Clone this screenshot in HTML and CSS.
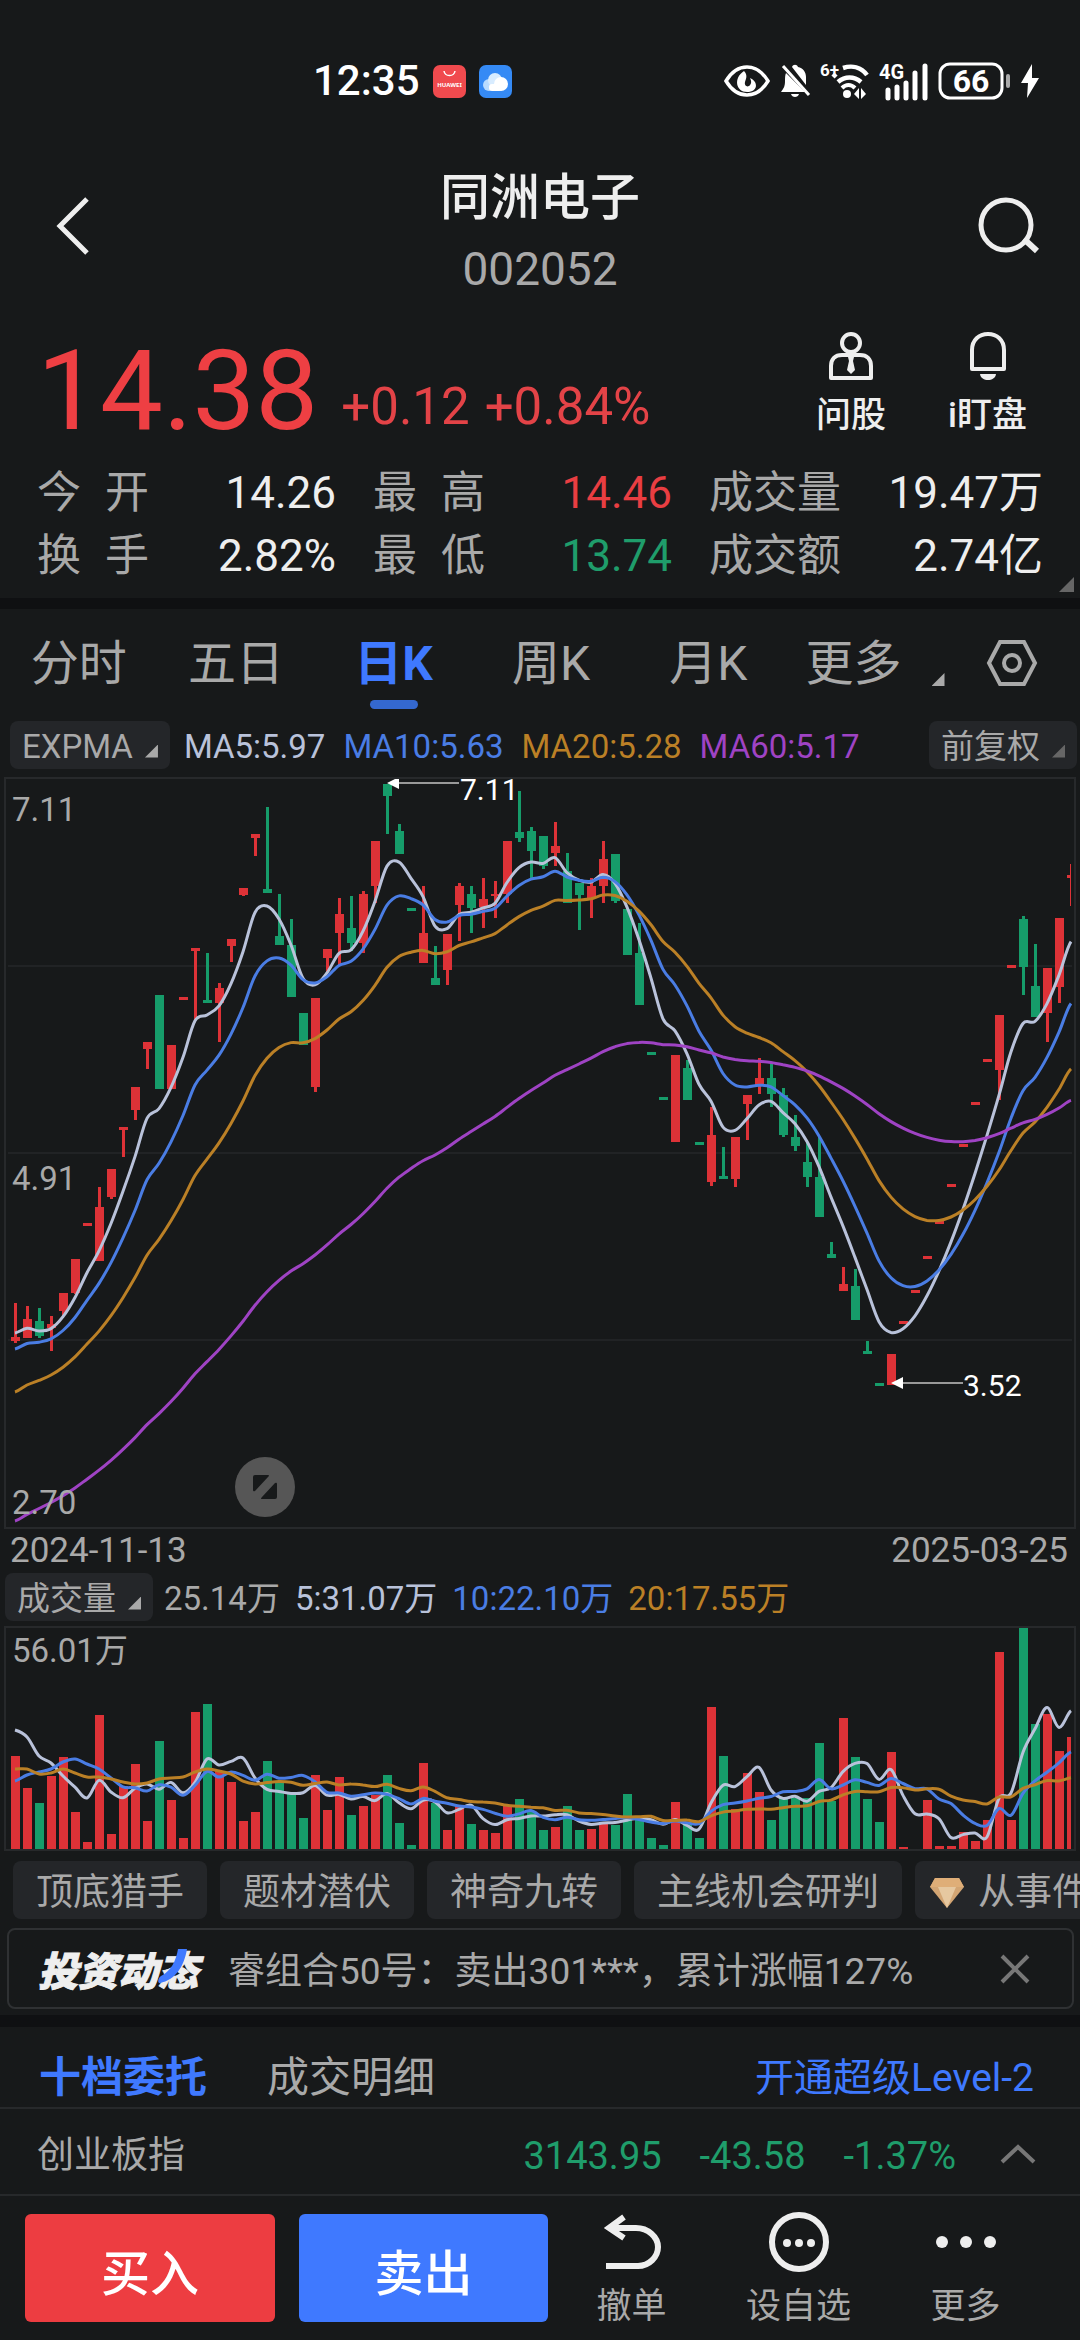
FILE: index.html
```html
<!DOCTYPE html>
<html lang="zh-CN">

<head>
  <meta charset="utf-8">
  <meta name="viewport" content="width=device-width, initial-scale=1">
  <title>同洲电子 002052</title>

  <link rel="stylesheet" href="styles.css">
</head>

<body>
  <div class="statusbar">
    <div class="status-left">
      <span class="clock">12:35</span>
      <svg class="app-icon" width="33" height="33" viewBox="0 0 33 33">
        <rect width="33" height="33" rx="7" fill="#f04a4e"/>
        <path d="M11 6c1 6 10 6 11 0" fill="none" stroke="#fff" stroke-width="1.5"/>
        <text x="16.5" y="22" class="app-text" text-anchor="middle">HUAWEI</text>
      </svg>
      <svg class="app-icon" width="33" height="33" viewBox="0 0 33 33">
        <rect width="33" height="33" rx="7" fill="#358af5"/>
        <circle cx="10" cy="20" r="6" fill="#b9dcff"/>
        <circle cx="16" cy="15" r="7" fill="#d8ecff"/>
        <circle cx="22" cy="19" r="7" fill="#fff"/>
        <rect x="10" y="19" width="13" height="7" rx="3" fill="#fff"/>
      </svg>
    </div>
    <div class="status-right">
      <svg width="46" height="32" viewBox="0 0 46 32">
        <path d="M2 16C8 6 15 2 23 2s15 4 21 14c-6 10-13 14-21 14S8 26 2 16z" fill="none" stroke="#fff" stroke-width="3.5"/>
        <path d="M20 6c4 4 2 8 1 11-1 4 3 6 5 3 2-2 1-5 0-7 8 3 9 14-3 14-11 0-14-14-3-21z" fill="#fff"/>
      </svg>
      <svg width="32" height="34" viewBox="0 0 32 34">
        <path d="M13 3c1-3 5-3 6 0 5 1 8 5 8 10v8zM7 9l19 19H2c3-4 4-6 4-11 0-3 0-6 1-8zM12 30h8c-1 4-7 4-8 0z" fill="#fff"/>
        <path d="M4 2l26 29" stroke="#fff" stroke-width="3"/>
      </svg>
      <svg width="50" height="38" viewBox="0 0 50 38">
        <text x="0" y="14" class="net-text">6+</text>
        <path d="M23 6c9-3 18-1 24 7M13 15l3-3M18 20c7-6 16-6 23 0" fill="none" stroke="#fff" stroke-width="4.5"/>
        <path d="M22 26c4-4 9-4 13 0" fill="none" stroke="#fff" stroke-width="4"/>
        <circle cx="27" cy="32" r="4" fill="#fff"/>
        <path d="M34 32l5-6v11zM46 32l-5-6v11z" fill="#fff"/>
      </svg>
      <svg width="50" height="38" viewBox="0 0 50 38">
        <text x="0" y="17" class="net-text net-4g">4G</text>
        <path d="M9 36v-8M18 36V25M27 36V21M36 36V11M46 36V4" stroke="#fff" stroke-width="5" stroke-linecap="round"/>
      </svg>
      <svg width="74" height="38" viewBox="0 0 74 38">
        <rect x="2" y="2" width="62" height="34" rx="10" fill="none" stroke="#fff" stroke-width="3"/>
        <path d="M70 14v10" stroke="#aaa" stroke-width="4" stroke-linecap="round"/>
        <text x="33" y="30" class="battery-text" text-anchor="middle">66</text>
      </svg>
      <svg width="18" height="34" viewBox="0 0 18 34">
        <path d="M11 0L0 19h7L6 34l12-20h-7z" fill="#fff"/>
      </svg>
    </div>
  </div>

  <header class="header">
    <button class="icon-btn" aria-label="返回">
      <svg width="64" height="60" viewBox="0 0 64 60"><path d="M47 3L20 30l27 27" fill="none" stroke="#eee" stroke-width="5"/></svg>
    </button>
    <div class="header-title">
      <h1>同洲电子</h1>
      <p>002052</p>
    </div>
    <button class="icon-btn" aria-label="搜索">
      <svg width="64" height="60" viewBox="0 0 64 60"><circle cx="30" cy="29" r="25" fill="none" stroke="#eee" stroke-width="5"/><path d="M48 43l13 12" stroke="#eee" stroke-width="6"/></svg>
    </button>
  </header>

  <section class="quote">
    <div class="quote-top">
      <div class="price">
        <strong>14.38</strong>
        <span>+0.12</span>
        <span>+0.84%</span>
      </div>
      <div class="quote-actions">
        <button>
          <svg width="48" height="50" viewBox="0 0 48 50">
            <circle cx="24" cy="12" r="9" fill="none" stroke="#eee" stroke-width="4"/>
            <path d="M4 47V35c0-7 4-11 11-11h18c7 0 11 4 11 11v12z" fill="none" stroke="#eee" stroke-width="4" stroke-linejoin="round"/>
            <path d="M21 26h6l-1 4 2 9-4 4-4-4 2-9z" fill="#eee"/>
          </svg>
          问股
        </button>
        <button>
          <svg width="48" height="50" viewBox="0 0 48 50">
            <path d="M8 38V19C8 9 15 3 24 3s16 6 16 16v19z" fill="none" stroke="#eee" stroke-width="4" stroke-linejoin="round"/>
            <path d="M16 43h16c-1 8-15 8-16 0z" fill="#eee"/>
          </svg>
          i盯盘
        </button>
      </div>
    </div>
    <dl class="stats">
      <div><dt><span>今</span><span>开</span></dt><dd>14.26</dd></div>
      <div><dt><span>最</span><span>高</span></dt><dd class="up">14.46</dd></div>
      <div><dt>成交量</dt><dd>19.47万</dd></div>
      <div><dt><span>换</span><span>手</span></dt><dd>2.82%</dd></div>
      <div><dt><span>最</span><span>低</span></dt><dd class="down">13.74</dd></div>
      <div><dt>成交额</dt><dd>2.74亿</dd></div>
    </dl>
    <i class="corner quote-corner"></i>
  </section>

  <nav class="period">
    <button>分时</button>
    <button>五日</button>
    <button class="active">日K</button>
    <button>周K</button>
    <button>月K</button>
    <button class="period-more">更多<i class="corner"></i></button>
    <button class="period-set" aria-label="设置">
      <svg width="52" height="48" viewBox="0 0 52 48"><path d="M14 3h24l11 21-11 21H14L3 24z" fill="none" stroke="#a9a9a9" stroke-width="4"/><circle cx="26" cy="24" r="8" fill="none" stroke="#a9a9a9" stroke-width="4"/></svg>
    </button>
  </nav>

  <div class="legend">
    <button class="chip">EXPMA<i class="corner"></i></button>
    <span class="c5">MA5:5.97</span>
    <span class="c10">MA10:5.63</span>
    <span class="c20">MA20:5.28</span>
    <span class="c60">MA60:5.17</span>
    <button class="chip chip-right">前复权<i class="corner dim"></i></button>
  </div>

  <div class="chart">
    <svg id="kline" viewBox="0 0 1070 750">
      <path d="M3 188H1067M3 375H1067M3 562H1067" stroke="#2d2f31" stroke-width="1"/>
      <g id="candles"></g>
      <g id="lines"></g>
      <g class="axis-text">
        <text x="7" y="43">7.11</text>
        <text x="7" y="412">4.91</text>
        <text x="7" y="736">2.70</text>
      </g>
      <path d="M394 5H454M898 605H958" stroke="#999" stroke-width="2"/>
      <path d="M382 5l12-6v12zM886 605l12-6v12z" fill="#fff"/>
      <g class="mark-text">
        <text x="455" y="22">7.11</text>
        <text x="958" y="618">3.52</text>
      </g>
    </svg>
    <button class="expand" aria-label="全屏">
      <svg width="24" height="24" viewBox="0 0 24 24"><path d="M2 0h13q2 0 0 2L2 16q-2 1-2-1V2q0-2 2-2zM22 24H9q-2 0 0-2L22 8q2-1 2 1v13q0 2-2 2z" fill="#17191a"/></svg>
    </button>
  </div>
  <div class="dates"><time>2024-11-13</time><time>2025-03-25</time></div>

  <div class="legend legend-vol">
    <button class="chip">成交量<i class="corner"></i></button>
    <span>25.14万</span>
    <span class="c5">5:31.07万</span>
    <span class="c10">10:22.10万</span>
    <span class="c20">20:17.55万</span>
  </div>
  <div class="chart">
    <svg id="volume" viewBox="0 0 1070 223">
      <g id="bars"></g>
      <g id="vlines"></g>
      <text x="7" y="35" class="axis-text">56.01万</text>
    </svg>
  </div>

  <div class="tags">
    <button>顶底猎手</button>
    <button>题材潜伏</button>
    <button>神奇九转</button>
    <button>主线机会研判</button>
    <button class="tag-vip">
      <svg width="34" height="30" viewBox="0 0 34 30"><path d="M5 0h24l5 9-17 21L0 9z" fill="#d3a573"/><path d="M5 0h24l5 9H0z" fill="#dfae78"/><path d="M8 9h18l-9 21z" fill="#e6c8a0"/></svg>
      从事件
    </button>
  </div>

  <div class="notice">
    <div class="notice-logo">投资动态<svg width="30" height="36" viewBox="0 0 30 36"><path d="M29 0c-3 18-12 31-27 34-3 0-2-5 1-7C13 22 18 12 20 0z" fill="#3f79ff"/></svg></div>
    <p>睿组合50号：卖出301***，累计涨幅127%</p>
    <button class="icon-btn" aria-label="关闭">
      <svg width="30" height="30" viewBox="0 0 30 30"><path d="M2 2l26 26M28 2L2 28" stroke="#777" stroke-width="4"/></svg>
    </button>
  </div>

  <section class="orders">
    <div class="order-tabs">
      <button class="active">十档委托</button>
      <button>成交明细</button>
      <a href="#level2">开通超级Level-2</a>
    </div>
    <div class="index-row">
      <span class="index-name">创业板指</span>
      <span>3143.95</span>
      <span>-43.58</span>
      <span>-1.37%</span>
      <button class="icon-btn" aria-label="展开">
        <svg width="36" height="20" viewBox="0 0 36 20"><path d="M2 18L18 3l16 15" fill="none" stroke="#777" stroke-width="4"/></svg>
      </button>
    </div>
  </section>

  <footer class="trade">
    <button class="buy">买入</button>
    <button class="sell">卖出</button>
    <button class="act">
      <svg width="62" height="60" viewBox="0 0 62 60"><path d="M23 5L8 16l15 10M8 16h27c12 0 22 9 22 19S48 54 37 54H5" fill="none" stroke="#eee" stroke-width="6"/></svg>
      撤单
    </button>
    <button class="act">
      <svg width="62" height="60" viewBox="0 0 62 60"><circle cx="31" cy="30" r="27" fill="none" stroke="#eee" stroke-width="6"/><g fill="#eee"><circle cx="19" cy="31" r="4"/><circle cx="31" cy="31" r="4"/><circle cx="43" cy="31" r="4"/></g></svg>
      设自选
    </button>
    <button class="act">
      <svg width="62" height="60" viewBox="0 0 62 60"><g fill="#eee"><circle cx="7" cy="30" r="6"/><circle cx="31" cy="30" r="6"/><circle cx="55" cy="30" r="6"/></g></svg>
      更多
    </button>
  </footer>

  <script src="chart.js"></script>
</body>

</html>
```

FILE: styles.css
```css
* {
  box-sizing: border-box;
}

body {
  margin: 0;
  background: #17191a;
  color: #eee;
  font-family: Roboto, "Noto Sans CJK SC", sans-serif;
  overflow-x: hidden;
}

h1, p, dl, dt, dd {
  margin: 0;
}

button {
  padding: 0;
  border: 0;
  background: none;
  color: inherit;
  font: inherit;
  white-space: nowrap;
}

svg {
  display: block;
  flex: none;
}

.up { color: #e93e42; }
.down { color: #1f9d6b; }
.c5 { color: #b9c2da; }
.c10 { color: #4a7de4; }
.c20 { color: #bb8026; }
.c60 { color: #9f43c4; }

/* small triangle in the lower right of a drop-down */
.corner {
  display: inline-block;
  width: 13px;
  height: 13px;
  background: #a9a9a9;
  clip-path: polygon(100% 0, 100% 100%, 0 100%);
}

.corner.dim {
  background: #666;
}

/* status bar */
.statusbar {
  display: flex;
  justify-content: space-between;
  align-items: center;
  height: 162px;
  padding: 0 41px 0 313px;
  color: #fff;
}

.status-left,
.status-right {
  display: flex;
  align-items: center;
}

.status-left { gap: 13px; }
.status-right { gap: 9px; }

.statusbar svg {
  overflow: visible;
}

.clock {
  font-size: 42px;
  font-weight: 500;
  line-height: 56px;
}

.app-text {
  fill: #fff;
  font: bold 6px "Noto Sans", sans-serif;
}

.net-text {
  fill: #fff;
  font: bold 17px Roboto, sans-serif;
}

.net-4g {
  font-size: 20px;
}

.battery-text {
  fill: #fff;
  font: bold 32px Roboto, sans-serif;
}

/* header */
.header {
  display: flex;
  justify-content: space-between;
  align-items: center;
  height: 128px;
  padding: 0 40px;
}

.header-title {
  padding-top: 14px;
  text-align: center;
}

.header-title h1 {
  font-size: 50px;
  font-weight: 500;
  line-height: 72px;
}

.header-title p {
  color: #a9a9a9;
  font-size: 46px;
  line-height: 70px;
}

/* quote */
.quote {
  position: relative;
  padding: 30px 37px 10px;
  border-bottom: 11px solid #0f1012;
}

.quote-top {
  display: flex;
  justify-content: space-between;
  align-items: center;
  height: 142px;
}

.price {
  display: flex;
  align-items: flex-end;
  gap: 15px;
  color: #e34347;
  font-size: 51px;
  line-height: 80px;
}

.price strong {
  margin-right: 8px;
  color: #ee3f43;
  font-size: 112px;
  font-weight: 400;
  line-height: 112px;
}

.quote-actions {
  display: flex;
  gap: 62px;
  padding: 0 16px 10px 0;
}

.quote-actions button {
  display: flex;
  flex-direction: column;
  align-items: center;
  gap: 10px;
  font-size: 35px;
  font-weight: 500;
  line-height: 50px;
}

.stats {
  display: grid;
  grid-template-columns: 299fr 299fr 334fr;
  column-gap: 37px;
  font-size: 44px;
  line-height: 63px;
}

.stats div,
.stats dt {
  display: flex;
  justify-content: space-between;
}

.stats dt {
  min-width: 112px;
  color: #a9a9a9;
}

.quote-corner {
  position: absolute;
  right: 6px;
  bottom: 6px;
  width: 15px;
  height: 15px;
  background: #666;
}

/* period tabs */
.period {
  display: grid;
  grid-template-columns: repeat(6, 158fr) 136fr;
  height: 112px;
  color: #a9a9a9;
  font-size: 48px;
  line-height: 98px;
}

.period button {
  display: flex;
  flex-direction: column;
  align-items: center;
  padding-top: 6px;
}

.period .active {
  color: #3f79ff;
  font-weight: 700;
}

.period .active::after {
  content: "";
  width: 48px;
  height: 9px;
  margin-top: -13px;
  border-radius: 5px;
  background: #3468cf;
}

.period .period-more {
  flex-direction: row;
  align-items: flex-start;
  justify-content: flex-end;
  gap: 30px;
}

.period-more .corner {
  margin-top: 58px;
}

.period .period-set {
  padding-top: 30px;
}

/* legends above both charts */
.legend {
  display: flex;
  align-items: center;
  gap: 18px;
  height: 48px;
  margin-bottom: 9px;
  padding: 0 3px 0 10px;
  color: #a9a9a9;
  font-size: 33px;
  line-height: 48px;
}

.legend span {
  padding-top: 3px;
  white-space: nowrap;
}

.legend-vol {
  gap: 15px;
  margin-bottom: 6px;
  padding-left: 5px;
}

.chip {
  display: flex;
  align-items: center;
  gap: 12px;
  height: 48px;
  margin-right: -4px;
  padding: 3px 12px 0;
  border-radius: 8px;
  background: #242629;
}

.chip .corner {
  margin-top: 9px;
}

.chip-right {
  margin-left: auto;
  margin-right: 0;
}

/* charts */
.chart {
  position: relative;
  margin: 0 5px;
  outline: 2px solid #27292b;
  outline-offset: -1px;
}

.chart > svg {
  width: 100%;
  height: auto;
  overflow: visible;
}

.axis-text {
  fill: #a9a9a9;
  font-size: 33px;
}

.mark-text {
  fill: #fff;
  font-size: 30px;
}

.expand {
  position: absolute;
  left: 230px;
  bottom: 11px;
  display: flex;
  align-items: center;
  justify-content: center;
  width: 60px;
  height: 60px;
  border-radius: 50%;
  background: #565656;
}

.dates {
  display: flex;
  justify-content: space-between;
  padding: 0 12px 0 10px;
  color: #a9a9a9;
  font-size: 35px;
  line-height: 45px;
}

/* tags */
.tags {
  display: flex;
  gap: 13px;
  margin: 11px 0 9px;
  padding-left: 13px;
  overflow: hidden;
  color: #a9a9a9;
  font-size: 37px;
  line-height: 52px;
}

.tags button {
  flex: none;
  padding: 6px 23px 0;
  border-radius: 8px;
  background: #242629;
}

.tags .tag-vip {
  display: flex;
  align-items: center;
  gap: 14px;
  padding-left: 15px;
}

/* notice */
.notice {
  display: flex;
  align-items: center;
  height: 81px;
  margin: 0 6px 6px 7px;
  padding: 0 42px 0 29px;
  border: 2px solid #2f3133;
  border-radius: 8px;
  line-height: 60px;
}

.notice-logo {
  position: relative;
  padding-top: 8px;
  font-size: 40px;
  font-style: italic;
  font-weight: 900;
  -webkit-text-stroke: 1px #eee;
}

.notice-logo svg {
  position: absolute;
  top: 14px;
  right: 10px;
}

.notice p {
  flex: 1;
  padding: 6px 0 0 30px;
  color: #a9a9a9;
  font-size: 37px;
}

/* orders */
.orders {
  border-top: 12px solid #0f1012;
}

.order-tabs {
  display: flex;
  align-items: center;
  gap: 60px;
  height: 82px;
  padding: 22px 46px 0 39px;
  border-bottom: 2px solid #27292b;
  color: #a9a9a9;
  font-size: 42px;
  line-height: 60px;
}

.order-tabs .active {
  color: #3f79ff;
  font-weight: 700;
}

.order-tabs a {
  margin-left: auto;
  color: #3f79ff;
  font-size: 39px;
  text-decoration: none;
}

.index-row {
  display: flex;
  align-items: center;
  gap: 38px;
  height: 87px;
  padding: 4px 44px 0 37px;
  border-bottom: 2px solid #27292b;
  color: #1f9d6b;
  font-size: 38px;
  line-height: 60px;
}

.index-row span {
  padding-top: 4px;
}

.index-row .index-name {
  flex: 1;
  color: #a9a9a9;
  font-size: 37px;
}

.index-row .icon-btn {
  margin-left: 6px;
}

/* bottom bar */
.trade {
  display: grid;
  grid-template-columns: 274fr 249fr 167fr 167fr 167fr;
  align-items: start;
  padding: 16px 31px 6px 25px;
}

.buy,
.sell {
  height: 108px;
  margin-top: 2px;
  padding-top: 2px;
  border-radius: 6px;
  background: #3f79ff;
  color: #fff;
  font-size: 49px;
  font-weight: 500;
}

.buy {
  margin-right: 24px;
  background: #ed3d41;
}

.act {
  display: flex;
  flex-direction: column;
  align-items: center;
  gap: 10px;
  color: #a9a9a9;
  font-size: 35px;
  line-height: 50px;
}
```

FILE: chart.js
```js
var RED = '#dd3237'
var GREEN = '#169c6a'
var STEP = 12
var RIGHT = 1066

// [up, high, bodyTop, bodyBottom, low], all in chart units
var candles = [
  [1,525,559,563,565],[1,528,541,560,560],[0,530,543,558,560],[1,538,546,550,573],[1,515,515,533,538],
  [1,481,481,515,516],[1,445,445,448,448],[1,409,429,483,483],[1,391,391,419,421],[1,349,349,352,379],
  [1,309,309,332,342],[1,264,264,271,291],[0,217,217,311,311],[1,267,267,311,311],[1,219,219,222,222],
  [1,170,170,173,242],[0,175,222,225,225],[1,205,210,225,264],[1,161,161,168,184],[1,110,110,117,118],
  [1,56,56,60,78],[0,29,111,115,115],[0,116,158,167,167],[0,141,167,219,219],[0,235,235,267,267],
  [1,220,220,309,314],[1,171,171,180,194],[1,120,136,155,187],[0,118,150,165,173],[1,113,116,165,175],
  [1,63,63,108,125],[0,6,6,18,56],[0,46,53,76,76],[0,130,130,133,133],[1,108,155,185,185],
  [0,168,200,207,207],[1,156,156,192,207],[1,105,108,127,163],[0,108,116,130,155],[1,100,121,129,150],
  [1,103,116,118,140],[1,63,63,116,125],[0,13,54,60,64],[0,49,53,73,100],[0,58,58,88,91],
  [1,44,68,75,88],[0,75,93,125,125],[0,105,105,117,152],[1,100,108,120,140],[1,63,81,108,125],
  [0,76,76,123,125],[0,131,131,177,177],[0,145,175,227,227],[0,274,274,277,277],[0,319,319,322,322],
  [1,277,277,364,364],[0,282,290,322,322],[0,364,364,367,367],[1,329,357,404,408],[0,369,398,401,401],
  [1,359,359,401,409],[1,317,317,326,362],[1,280,300,307,316],[0,285,300,316,329],[0,310,317,357,359],
  [0,337,359,368,373],[0,364,384,399,409],[0,359,399,439,439],[0,464,476,480,480],[1,489,506,513,513],
  [0,491,508,542,542],[0,563,573,576,576],[0,605,605,608,608],[1,576,576,607,607],[1,543,543,546,546],
  [1,512,512,515,515],[1,478,478,481,481],[1,443,443,446,446],[1,406,406,409,409],[1,366,366,369,369],
  [1,324,324,327,327],[1,281,281,284,284],[1,237,237,292,322],[1,187,187,190,190],[0,138,141,189,217],
  [0,166,208,239,239],[1,190,190,235,264],[1,140,140,209,225],[1,86,97,100,128]
]

var volumes = [94,62,47,74,93,38,8,135,16,64,86,29,109,50,12,138,146,79,68,29,38,89,69,58,32,75,40,73,35,44,
  55,75,27,5,87,47,20,44,26,20,17,44,51,38,20,23,44,20,21,27,25,56,31,12,5,48,27,12,143,94,
  41,77,58,30,52,52,52,107,49,132,93,51,28,98,3,1,50,4,4,18,9,30,198,30,222,126,136,99,113]

// averages for the days that still need earlier history
var volumeHead = {
  5: [120,113,94,87],
  10: [69,75,78,81,88,91,86,81,72],
  20: [81,81,76,77,81,77,73,73,71,68,66,67,71,72,73,78,81,79,76]
}

function xOf(i) {
  return 10 + i * STEP
}

function rect(x, y, w, h, fill) {
  w = Math.min(w, RIGHT - x)
  if (w <= 0) return ''
  return '<rect x="' + x + '" y="' + y + '" width="' + w + '" height="' + h + '" fill="' + fill + '"/>'
}

function curve(ys, color) {
  var d = 'M' + xOf(0) + ' ' + ys[0].toFixed(1)
  for (var i = 0; i < ys.length - 1; i++) {
    var a = ys[Math.max(i - 1, 0)]
    var b = ys[i]
    var c = ys[i + 1]
    var e = ys[Math.min(i + 2, ys.length - 1)]
    d += 'C' + (xOf(i) + 4) + ' ' + (b + (c - a) / 6).toFixed(1) +
      ' ' + (xOf(i + 1) - 4) + ' ' + (c - (e - b) / 6).toFixed(1) +
      ' ' + xOf(i + 1) + ' ' + c.toFixed(1)
  }
  return '<path d="' + d + '" fill="none" stroke="' + color + '" stroke-width="3"/>'
}

function ema(n, start) {
  var out = [start]
  for (var i = 1; i < candles.length; i++) {
    var close = candles[i][0] ? candles[i][2] : candles[i][3]
    out.push(out[i - 1] + (close - out[i - 1]) * 2 / (n + 1))
  }
  return out
}

function sma(n) {
  var out = volumeHead[n].slice()
  for (var i = n - 1; i < volumes.length; i++) {
    var sum = 0
    for (var j = 0; j < n; j++) sum += volumes[i - j]
    out.push(sum / n)
  }
  return out.map(function (v) { return 223 - v })
}

var candleHtml = ''
var barHtml = ''
candles.forEach(function (c, i) {
  var color = c[0] ? RED : GREEN
  candleHtml += rect(xOf(i) - 1, c[1], 3, c[4] - c[1], color)
  candleHtml += rect(xOf(i) - 4, c[2], 9, c[3] - c[2], color)
  barHtml += rect(xOf(i) - 4, 223 - volumes[i], 9, volumes[i], color)
})
document.getElementById('candles').innerHTML = candleHtml
document.getElementById('bars').innerHTML = barHtml

document.getElementById('lines').innerHTML =
  curve(ema(5, 555), '#b9c2da') + curve(ema(10, 571), '#4a7de4') +
  curve(ema(20, 614), '#bb8026') + curve(ema(60, 743), '#9f43c4')
document.getElementById('vlines').innerHTML =
  curve(sma(5), '#b9c2da') + curve(sma(10), '#4a7de4') + curve(sma(20), '#bb8026')
```
